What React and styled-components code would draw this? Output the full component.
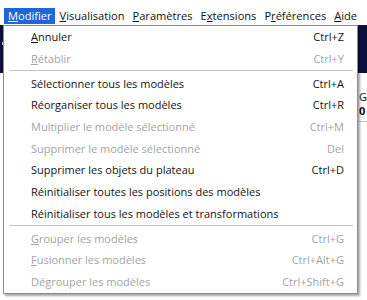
import React from 'react'
import styled, { createGlobalStyle } from 'styled-components'

const Global = createGlobalStyle`
    html, body { margin: 0; padding: 0; background: #fff; }
    body { font-family: "Open Sans", "Liberation Sans", sans-serif; }
`

const menus = [
    { label: 'Modifier', key: 0, active: true },
    { label: 'Visualisation', key: 0 },
    { label: 'Paramètres', key: 0 },
    { label: 'Extensions', key: 1 },
    { label: 'Préférences', key: 1 },
    { label: 'Aide', key: 0 },
]

const items = [
    { label: 'Annuler', key: 0, shortcut: 'Ctrl+Z' },
    { label: 'Rétablir', key: 0, shortcut: 'Ctrl+Y', disabled: true },
    'sep',
    { label: 'Sélectionner tous les modèles', shortcut: 'Ctrl+A' },
    { label: 'Réorganiser tous les modèles', shortcut: 'Ctrl+R' },
    { label: 'Multiplier le modèle sélectionné', shortcut: 'Ctrl+M', disabled: true },
    { label: 'Supprimer le modèle sélectionné', shortcut: 'Del', disabled: true },
    { label: 'Supprimer les objets du plateau', shortcut: 'Ctrl+D' },
    { label: 'Réinitialiser toutes les positions des modèles' },
    { label: 'Réinitialiser tous les modèles et transformations' },
    'sep',
    { label: 'Grouper les modèles', key: 0, shortcut: 'Ctrl+G', disabled: true },
    { label: 'Fusionner les modèles', key: 0, shortcut: 'Ctrl+Alt+G', disabled: true },
    { label: 'Dégrouper les modèles', shortcut: 'Ctrl+Shift+G', disabled: true },
]

const Mnemonic = ({ text, at }) => {
    if (at === undefined) return text
    return (
        <>
            {text.slice(0, at)}
            <u>{text[at]}</u>
            {text.slice(at + 1)}
        </>
    )
}

export default function App() {
    return (
        <Page>
            <Global />
            <TopStrip />
            <MenuBar>
                {menus.map((m) => (
                    <MenuTitle key={m.label} $active={m.active}>
                        <Mnemonic text={m.label} at={m.key} />
                    </MenuTitle>
                ))}
            </MenuBar>
            <Workspace>
                <ViewBar>
                    <Grip />
                </ViewBar>
                <Panels>
                    <SidePanel>
                        <span>G</span>
                        <b>0</b>
                    </SidePanel>
                </Panels>
                <Popup>
                    {items.map((it, i) =>
                        it === 'sep' ? (
                            <Separator key={i} />
                        ) : (
                            <Item key={i} $disabled={it.disabled}>
                                <span>
                                    <Mnemonic text={it.label} at={it.key} />
                                </span>
                                <Shortcut>{it.shortcut}</Shortcut>
                            </Item>
                        )
                    )}
                </Popup>
            </Workspace>
        </Page>
    )
}

const Page = styled.div`
    width: 367px;
    height: 300px;
    overflow: hidden;
    background: #fff;
`

const TopStrip = styled.div`
    height: 7px;
`

const MenuBar = styled.div`
    display: flex;
    align-items: center;
    height: 18px;
    padding-left: 4px;
    gap: 1px;
    font-size: 11.1px;
    color: #111;
`

const MenuTitle = styled.div`
    padding: 0 3px 0 4px;
    height: 16px;
    line-height: 16px;
    background: ${(p) => (p.$active ? '#1f66d6' : 'transparent')};
    color: ${(p) => (p.$active ? '#fff' : '#111')};
    white-space: nowrap;
`

const Workspace = styled.div`
    position: relative;
    height: 275px;
`

const ViewBar = styled.div`
    height: 48px;
    background: #0f0f3e;
    position: relative;
`

const Grip = styled.div`
    position: absolute;
    left: 2px;
    top: 17px;
    width: 1px;
    height: 3px;
    background: #c9cbe0;
`

const Panels = styled.div`
    display: flex;
    justify-content: flex-end;
`

const SidePanel = styled.div`
    width: 8px;
    padding: 17px 0 3px;
    display: flex;
    flex-direction: column;
    font-size: 11px;
    line-height: 14px;
    color: #111;
    border-bottom: 1px solid #c6c6c6;
    overflow: hidden;
`

const Popup = styled.div`
    position: absolute;
    left: 3px;
    top: 0;
    width: 353px;
    background: #fff;
    border: 1px solid #8c8c8c;
    box-shadow: 2px 2px 2px rgba(0, 0, 0, 0.35);
    padding: 0 0 1px;
    font-size: 11px;
`

const Item = styled.div`
    display: flex;
    align-items: center;
    justify-content: space-between;
    height: 21.7px;
    padding: 0 13px 0 27px;
    color: ${(p) => (p.$disabled ? '#a3a3a3' : '#141414')};
    white-space: nowrap;
`

const Shortcut = styled.span`
    text-align: right;
`

const Separator = styled.div`
    height: 1px;
    margin: 1px 4px 1px 5px;
    background: #c4c4c4;
`
